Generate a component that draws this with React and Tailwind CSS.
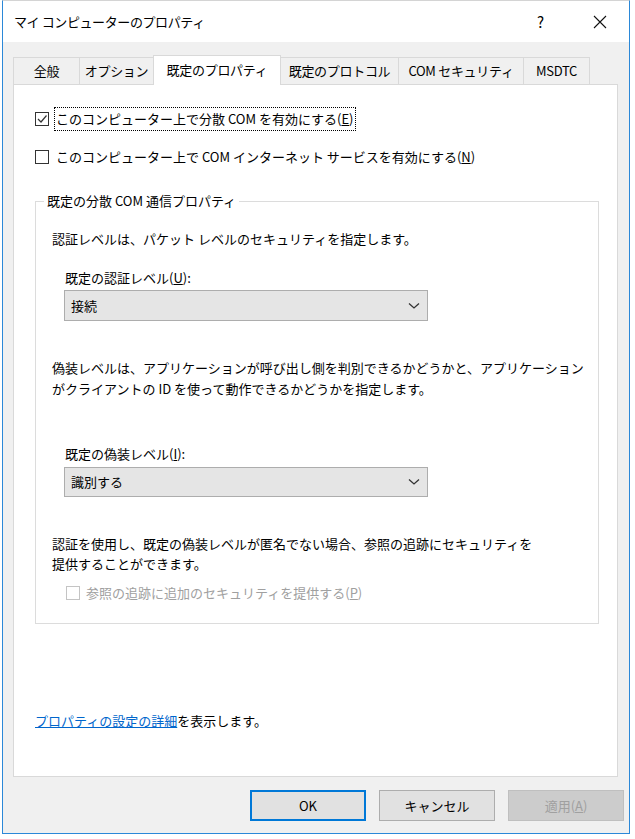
import React from "react";

const U = ({ children }) => <span className="underline">{children}</span>;

const CheckBox = ({ checked, disabled }) => (
  <span
    className={`flex h-[14px] w-[14px] shrink-0 items-center justify-center border bg-white ${
      disabled ? "border-[#c4c4c4]" : "border-[#333333]"
    }`}
  >
    {checked && (
      <svg width="12" height="12" viewBox="0 0 12 12">
        <polyline points="2,6 5,9 10.5,2.5" fill="none" stroke="#333" strokeWidth="1.2" />
      </svg>
    )}
  </span>
);

const Combo = ({ value, className }) => (
  <div
    className={`flex w-[364px] items-center justify-between border border-[#adadad] bg-[#e5e5e5] pl-[6px] pr-[7px] ${className}`}
  >
    <span>{value}</span>
    <svg width="12" height="8" viewBox="0 0 12 8">
      <polyline points="1,1.5 6,6 11,1.5" fill="none" stroke="#333" strokeWidth="1.3" />
    </svg>
  </div>
);

const tabs = [
  { label: "全般", w: "w-[67px]" },
  { label: "オプション", w: "w-[75px]" },
  { label: "既定のプロパティ", w: "w-[128px]", active: true },
  { label: "既定のプロトコル", w: "w-[119px]" },
  { label: "COM セキュリティ", w: "w-[126px]" },
  { label: "MSDTC", w: "w-[67px]" },
];

export default function App() {
  return (
    <div className="h-[839px] w-[635px] bg-white font-['Noto_Sans_CJK_JP',sans-serif] text-[13px] leading-[20px] text-black">
      <div className="ml-[2px] flex h-[834px] w-[628px] flex-col border border-[#2b88d8] border-t-[#d4d4d4] bg-[#f0f0f0]">
        {/* Title bar */}
        <div className="flex h-[41px] items-center bg-white pl-[11px]">
          <span className="flex-1 tracking-[-0.4px]">マイ コンピューターのプロパティ</span>
          <span className="mr-[49px] text-[15px]">?</span>
          <svg className="mr-[22px]" width="14" height="14" viewBox="0 0 14 14">
            <path d="M1 1 L13 13 M13 1 L1 13" stroke="#111" strokeWidth="1.1" />
          </svg>
        </div>

        {/* Tabs */}
        <div className="ml-[10px] mt-[13px] flex h-[29px] items-end">
          {tabs.map((t, i) => (
            <div
              key={t.label}
              className={`flex items-center justify-center border border-b-0 border-[#d9d9d9] ${t.w} ${
                i > 0 ? "-ml-px" : ""
              } ${t.active ? "relative z-10 -mb-px h-[30px] bg-white pb-[2px]" : "h-[27px] bg-[#f0f0f0]"}`}
            >
              <span className="tracking-[-0.3px]">{t.label}</span>
            </div>
          ))}
        </div>

        {/* Panel */}
        <div className="ml-[10px] flex h-[693px] w-[605px] flex-col border border-[#d9d9d9] bg-white">
          <div className="ml-[21px] mt-[22px] flex items-center">
            <CheckBox checked />
            <span className="ml-[5px] border border-dotted border-black px-[1px] py-[1px] leading-[20px]">
              このコンピューター上で分散 COM を有効にする(<U>E</U>)
            </span>
          </div>
          <div className="ml-[21px] mt-[16px] flex items-center">
            <CheckBox />
            <span className="ml-[7px]">
              このコンピューター上で COM インターネット サービスを有効にする(<U>N</U>)
            </span>
          </div>

          <fieldset className="ml-[21px] mt-[24px] w-[564px] border border-[#dcdcdc] pb-[20px]">
            <legend className="ml-[8px] px-[3px] leading-[20px]">既定の分散 COM 通信プロパティ</legend>
            <p className="ml-[16px] mt-[18px]">認証レベルは、パケット レベルのセキュリティを指定します。</p>
            <p className="ml-[29px] mt-[19px]">
              既定の認証レベル(<U>U</U>):
            </p>
            <Combo value="接続" className="ml-[28px] mt-[2px] h-[31px]" />
            <p className="ml-[16px] mt-[36px] leading-[21px]">
              偽装レベルは、アプリケーションが呼び出し側を判別できるかどうかと、アプリケーション
              <br />
              がクライアントの ID を使って動作できるかどうかを指定します。
            </p>
            <p className="ml-[29px] mt-[45px]">
              既定の偽装レベル(<U>I</U>):
            </p>
            <Combo value="識別する" className="ml-[28px] mt-[3px] h-[30px]" />
            <p className="ml-[16px] mt-[37px]">
              認証を使用し、既定の偽装レベルが匿名でない場合、参照の追跡にセキュリティを
              <br />
              提供することができます。
            </p>
            <div className="ml-[30px] mt-[9px] flex items-center text-[#a0a0a0]">
              <CheckBox disabled />
              <span className="ml-[6px]">
                参照の追跡に追加のセキュリティを提供する(<U>P</U>)
              </span>
            </div>
          </fieldset>

          <p className="ml-[21px] mt-[87px]">
            <a className="text-[#0066cc] underline">プロパティの設定の詳細</a>を表示します。
          </p>
        </div>

        {/* Buttons */}
        <div className="mt-[13px] flex justify-end gap-[13px] pr-[5px]">
          <button className="h-[31px] w-[116px] border border-[#0078d7] bg-[#e1e1e1] shadow-[inset_0_0_0_1px_#0078d7]">
            OK
          </button>
          <button className="h-[31px] w-[116px] border border-[#adadad] bg-[#e1e1e1]">キャンセル</button>
          <button className="h-[31px] w-[116px] border border-[#bfbfbf] bg-[#cccccc] text-[#a0a0a0]">
            適用(<U>A</U>)
          </button>
        </div>
      </div>
    </div>
  );
}
